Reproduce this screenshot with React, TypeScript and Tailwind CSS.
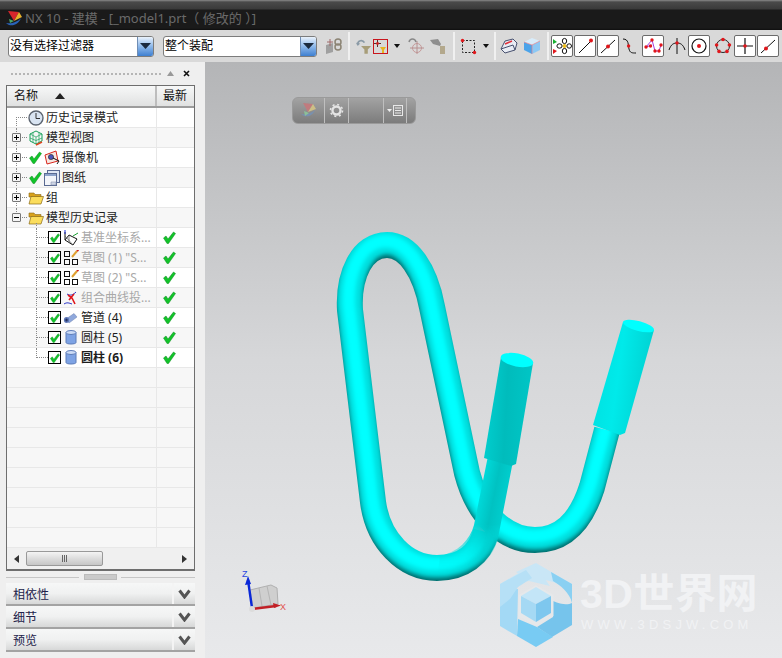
const cjk = "font-['Noto_Sans','Noto_Sans_CJK_SC',sans-serif]";

function TitleLogo() {
  return (
    <svg width="18" height="18" viewBox="0 0 18 18" className="mr-[2px]">
      <path d="M1 13C5 17 13 16 16 8C13 12 6 14 1 13Z" fill="#2a63b8" />
      <path d="M3 1L14 2L9 11Z" fill="#d8262c" />
      <path d="M9 11L14 2L17 7Z" fill="#e9b12c" />
      <path d="M4 9L9 11L5 13Z" fill="#4aa868" />
    </svg>
  );
}

function SelectBox({ label, width }: { label: string; width: string }) {
  return (
    <div className={`${width} h-[21px] flex items-center rounded-[3px] border border-[#7c7c7c] bg-white overflow-hidden`}>
      <span className="flex-1 pl-[1px] text-[12px] leading-none text-black">{label}</span>
      <span className="w-[16px] h-full flex items-center justify-center bg-gradient-to-b from-[#eaf2fb] via-[#8db8ea] to-[#3d7fd0] border-l border-[#6f8db4]">
        <svg width="11" height="7" viewBox="0 0 11 7"><path d="M0 0H11L5.5 6Z" fill="#1b2a3e" /></svg>
      </span>
    </div>
  );
}

function Sep() {
  return <div className="w-[2px] h-[28px] bg-[#f0f0f0]" />;
}

function Boxed({ children }: { children: React.ReactNode }) {
  return (
    <div className="w-[22px] h-[22px] mr-[1px] shrink-0 rounded-[2px] border border-[#6b6b6b] bg-white flex items-center justify-center">
      {children}
    </div>
  );
}

function Free({ w, children }: { w: string; children: React.ReactNode }) {
  return <div className={`${w} h-[22px] shrink-0 flex items-center justify-center`}>{children}</div>;
}

function Caret() {
  return <svg width="6" height="4" viewBox="0 0 6 4"><path d="M0 0H6L3 4Z" fill="#111" /></svg>;
}

function Dot({ cx, cy, r = 1.7 }: { cx: number; cy: number; r?: number }) {
  return <circle cx={cx} cy={cy} r={r} fill="#e0161b" />;
}

function Toolbar() {
  return (
    <div className={`h-[32px] bg-[#d9d9d9] flex items-center pl-[8px] ${cjk}`}>
      <SelectBox label="没有选择过滤器" width="w-[146px]" />
      <div className="w-[9px]" />
      <SelectBox label="整个装配" width="w-[154px]" />
      <Free w="w-[28px] pl-[6px]">
        <svg width="18" height="18" viewBox="0 0 18 18">
          <path d="M1 8L8 6V15L1 17Z" fill="#a0a0a0" />
          <circle cx="13" cy="5" r="3" fill="none" stroke="#8c8474" strokeWidth="1.5" />
          <circle cx="13" cy="10" r="3" fill="none" stroke="#8c8474" strokeWidth="1.5" />
          <path d="M5 2V9M2 5H8" stroke="#a06a6a" />
        </svg>
      </Free>
      <div className="w-[3px]" />
      <Sep />
      <div className="w-[6px]" />
      <Free w="w-[16px]">
        <svg width="19" height="19" viewBox="0 0 19 19" fill="none">
          <path d="M2 7C2 2 8 1 10 5" stroke="#8a9aa6" strokeWidth="2" />
          <path d="M0 5L2 9L5 6Z" fill="#8a9aa6" />
          <path d="M6 9H18L14 13V18H10V13Z" fill="#a79d78" />
        </svg>
      </Free>
      <div className="w-[15px] h-[15px] mx-[1px] border border-[#c8161d] relative shrink-0 flex items-center justify-center">
        <svg width="13" height="13" viewBox="0 0 13 13">
          <path d="M0 3.5H7M3.5 0V7" stroke="#5a2b2b" />
          <circle cx="3.5" cy="3.5" r="1.4" fill="#d02020" />
          <path d="M6 7H12L10 10V13H8V10Z" fill="#e6b422" />
        </svg>
      </div>
      <Free w="w-[16px]"><Caret /></Free>
      <Free w="w-[22px]">
        <svg width="18" height="18" viewBox="0 0 18 18" fill="none">
          <circle cx="10" cy="11" r="4.5" stroke="#c69a9a" />
          <path d="M10 4V17M3 11H17" stroke="#b89090" />
          <path d="M2 5C3 1 8 1 9 5" stroke="#888" strokeWidth="1.5" />
        </svg>
      </Free>
      <Free w="w-[20px]">
        <svg width="18" height="18" viewBox="0 0 18 18">
          <path d="M2 3L10 2L13 7L12 9L5 7Z" fill="#8f8f8f" />
          <path d="M12 9H17V17H12Z" fill="#b3a88c" />
        </svg>
      </Free>
      <div className="w-[6px]" />
      <Sep />
      <div className="w-[2px]" />
      <Free w="w-[22px]">
        <svg width="17" height="17" viewBox="0 0 17 17" fill="none">
          <rect x="2.5" y="2.5" width="12" height="12" stroke="#222" strokeDasharray="2 1.5" />
          <Dot cx={2.5} cy={2.5} /><Dot cx={14.5} cy={14.5} />
        </svg>
      </Free>
      <Free w="w-[14px]"><Caret /></Free>
      <div className="w-[1px]" />
      <Sep />
      <div className="w-[2px]" />
      <Free w="w-[22px]">
        <svg width="18" height="16" viewBox="0 0 18 16">
          <path d="M1 11L5 3L13 1L17 5L15 12L5 15Z" fill="#e8ecf4" stroke="#47506e" />
          <path d="M5 6L12 3" stroke="#e0303a" strokeWidth="1.5" />
          <path d="M1 11L13 7L15 12" fill="none" stroke="#47506e" />
        </svg>
      </Free>
      <Free w="w-[24px]">
        <svg width="18" height="18" viewBox="0 0 18 18">
          <path d="M1 5L9 8V17L1 13Z" fill="#4aa3ea" />
          <path d="M9 8L17 4V13L9 17Z" fill="#8cc8f4" />
          <path d="M1 5L9 1L17 4L9 8Z" fill="#d8ecfa" />
          <path d="M1 5L9 8L17 4M9 8V17" fill="none" stroke="#e0808a" strokeWidth="0.7" />
        </svg>
      </Free>
      <div className="w-[3px]" />
      <Sep />
      <div className="w-[2px]" />
      <Boxed>
        <svg width="20" height="20" viewBox="0 0 20 20" fill="none">
          <path d="M1 3L5 6L1 8Z" fill="#18b030" /><path d="M1 13L5 15L1 18Z" fill="#e0161b" />
          <circle cx="12.5" cy="10" r="2" fill="#f0c020" />
          <ellipse cx="12.5" cy="5" rx="2.2" ry="2.6" stroke="#111" /><ellipse cx="12.5" cy="15" rx="2.2" ry="2.6" stroke="#111" />
          <ellipse cx="7.5" cy="10" rx="2.6" ry="2.2" stroke="#111" /><ellipse cx="17.2" cy="10" rx="2.3" ry="2.2" stroke="#111" />
        </svg>
      </Boxed>
      <Boxed>
        <svg width="18" height="18" viewBox="0 0 18 18"><path d="M3 16L14 5" stroke="#111" /><Dot cx={15} cy={3.5} r={2} /></svg>
      </Boxed>
      <Boxed>
        <svg width="18" height="18" viewBox="0 0 18 18"><path d="M2 16L16 3" stroke="#111" /><Dot cx={9} cy={9.5} r={2} /></svg>
      </Boxed>
      <Free w="w-[22px]">
        <svg width="18" height="18" viewBox="0 0 18 18" fill="none"><path d="M1 2C7 2 6 8 7 12C8 16 10 16 14 16" stroke="#111" /><Dot cx={6.6} cy={9} /></svg>
      </Free>
      <Boxed>
        <svg width="19" height="18" viewBox="0 0 19 18" fill="none">
          <path d="M2 10L8 3L11 14L15 14L17 8" stroke="#a23be0" />
          <path d="M2 10L8 8" stroke="#a23be0" />
          <Dot cx={2} cy={10} /><Dot cx={8} cy={3} /><Dot cx={6.5} cy={9} /><Dot cx={11} cy={14} /><Dot cx={15} cy={14} /><Dot cx={17} cy={8} />
        </svg>
      </Boxed>
      <Free w="w-[23px]">
        <svg width="18" height="18" viewBox="0 0 18 18" fill="none"><path d="M1 13C3 7 6 6 9 6C12 6 15 7 17 13M9 1V17" stroke="#111" /><Dot cx={9} cy={6} /></svg>
      </Free>
      <Boxed>
        <svg width="18" height="18" viewBox="0 0 18 18" fill="none"><circle cx="9" cy="9" r="7" stroke="#111" strokeWidth="1.2" /><Dot cx={9} cy={9} r={2} /></svg>
      </Boxed>
      <Free w="w-[23px]">
        <svg width="18" height="18" viewBox="0 0 18 18" fill="none">
          <circle cx="9" cy="9" r="6.5" stroke="#222" />
          <Dot cx={9} cy={2.5} r={1.8} /><Dot cx={2.6} cy={8} r={1.8} /><Dot cx={15.4} cy={8} r={1.8} /><Dot cx={5} cy={14.4} r={1.8} /><Dot cx={13} cy={14.4} r={1.8} />
        </svg>
      </Free>
      <Boxed>
        <svg width="18" height="18" viewBox="0 0 18 18"><path d="M1 9H17M9 1V17" stroke="#111" strokeWidth="1.2" /><Dot cx={9} cy={9} r={1.8} /></svg>
      </Boxed>
      <Boxed>
        <svg width="18" height="18" viewBox="0 0 18 18"><path d="M2 16L16 3" stroke="#111" /><Dot cx={7} cy={11.5} r={2} /></svg>
      </Boxed>
    </div>
  );
}

function Check({ size = 13 }: { size?: number }) {
  return (
    <svg width={size} height={size} viewBox="0 0 13 13">
      <path d="M0.5 7L3 5L5 8L10.5 1L12.5 2.5L5.5 12.5H4Z" fill="#12c32a" stroke="#0a8a1c" strokeWidth="0.5" />
    </svg>
  );
}

function Expander({ minus }: { minus?: boolean }) {
  return (
    <div className="w-[9px] h-[9px] border border-[#777] rounded-[1px] bg-[#f4f4f4] flex items-center justify-center relative">
      <div className="absolute w-[5px] h-[1px] bg-black" />
      {!minus && <div className="absolute w-[1px] h-[5px] bg-black" />}
    </div>
  );
}

function NodeIcon({ kind }: { kind: string }) {
  switch (kind) {
    case "clock":
      return (
        <svg width="16" height="16" viewBox="0 0 16 16">
          <circle cx="8" cy="8" r="7" fill="#d9e4f2" stroke="#5c6470" strokeWidth="1.4" />
          <path d="M8 3V8.5H12" fill="none" stroke="#333" />
        </svg>
      );
    case "view":
      return (
        <svg width="16" height="16" viewBox="0 0 16 16" fill="none" stroke="#17a05a">
          <path d="M8 1L14 4V11L8 14L2 11V4Z" />
          <path d="M2 4L8 7L14 4M8 7V14M2 8L8 10.5L14 8M5 2.5V12.5M11 2.5V12.5" strokeWidth="0.7" />
          <path d="M8 15L14 12" stroke="#e0431f" strokeWidth="1.4" />
        </svg>
      );
    case "camera":
      return (
        <svg width="16" height="16" viewBox="0 0 16 16" fill="none">
          <path d="M1 5L12 1L14 11L3 14Z" fill="#f6e6e0" stroke="#d8261c" />
          <circle cx="7" cy="7" r="2.6" fill="#4c55b8" stroke="#222" strokeWidth="0.6" />
          <path d="M9 8L15 11L13 14" stroke="#111" />
        </svg>
      );
    case "drawing":
      return (
        <svg width="16" height="16" viewBox="0 0 16 16">
          <rect x="3.5" y="0.5" width="12" height="12" fill="#dfe6f3" stroke="#5a6a92" />
          <rect x="0.5" y="3.5" width="12" height="12" fill="#f3f5fa" stroke="#5a6a92" />
          <path d="M1 4H12V6H1Z" fill="#8ea4cc" />
          <path d="M7 12H12V15H7Z" fill="#cfd6e6" stroke="#7a86a0" strokeWidth="0.5" />
        </svg>
      );
    case "folder":
      return (
        <svg width="16" height="14" viewBox="0 0 16 14">
          <path d="M1 2H6L7 3.5H13V6H1Z" fill="#d9a21c" stroke="#8a6a18" strokeWidth="0.6" />
          <path d="M1 13L3 5.5H15.5L13 13Z" fill="#fbdd5d" stroke="#8a6a18" strokeWidth="0.7" />
        </svg>
      );
    case "datum":
      return (
        <svg width="16" height="16" viewBox="0 0 16 16" fill="none">
          <path d="M2 2V10L10 15L14 9L6 5L2 10" stroke="#111" />
          <path d="M2 6L10 15M6 5L6 12" stroke="#555" strokeWidth="0.7" />
          <path d="M2 4V0" stroke="#1c30d8" /><path d="M10 6L15 3" stroke="#18a030" />
        </svg>
      );
    case "sketch":
      return (
        <svg width="16" height="16" viewBox="0 0 16 16" fill="none" stroke="#111">
          <rect x="1.5" y="1.5" width="5" height="5" />
          <rect x="1.5" y="9.5" width="5" height="5" />
          <rect x="9.5" y="9.5" width="5" height="5" />
          <path d="M9 7L14 1" stroke="#e0a030" strokeWidth="2" />
          <path d="M14 1L15.5 0" stroke="#d02020" strokeWidth="2" />
        </svg>
      );
    case "project":
      return (
        <svg width="16" height="16" viewBox="0 0 16 16" fill="none">
          <path d="M1 14C4 12 6 13 9 14M4 4C7 6 10 5 13 2" stroke="#2b35c8" />
          <path d="M6 10L11 4M5 5L9 8L12 14" stroke="#e0161b" strokeWidth="1.6" />
        </svg>
      );
    case "pipe":
      return (
        <svg width="16" height="12" viewBox="0 0 16 12">
          <path d="M3 7L11 1.5L14 5L6 11Z" fill="#8fa8dc" stroke="#6f82b0" strokeWidth="0.5" />
          <ellipse cx="3.5" cy="8" rx="2.6" ry="3" fill="#5f78b8" />
          <ellipse cx="3.5" cy="8" rx="1.2" ry="1.5" fill="#27345e" />
        </svg>
      );
    default:
      return (
        <svg width="12" height="15" viewBox="0 0 12 15">
          <path d="M1 2.5V12.5C1 14.5 11 14.5 11 12.5V2.5Z" fill="#7ea3e4" stroke="#5d7cb8" />
          <ellipse cx="6" cy="2.5" rx="5" ry="2" fill="#cddcf6" stroke="#5d7cb8" />
        </svg>
      );
  }
}

type Row = { label?: string; kind?: string; level?: number; exp?: "plus" | "minus"; check?: boolean; gray?: boolean; bold?: boolean; latest?: boolean };

const rows: Row[] = [
  { label: "历史记录模式", kind: "clock", level: 0 },
  { label: "模型视图", kind: "view", level: 0, exp: "plus" },
  { label: "摄像机", kind: "camera", level: 0, exp: "plus", check: true },
  { label: "图纸", kind: "drawing", level: 0, exp: "plus", check: true },
  { label: "组", kind: "folder", level: 0, exp: "plus" },
  { label: "模型历史记录", kind: "folder", level: 0, exp: "minus" },
  { label: "基准坐标系...", kind: "datum", level: 1, gray: true, latest: true },
  { label: '草图 (1) "S...', kind: "sketch", level: 1, gray: true, latest: true },
  { label: '草图 (2) "S...', kind: "sketch", level: 1, gray: true, latest: true },
  { label: "组合曲线投...", kind: "project", level: 1, gray: true, latest: true },
  { label: "管道 (4)", kind: "pipe", level: 1, latest: true },
  { label: "圆柱 (5)", kind: "cyl", level: 1, latest: true },
  { label: "圆柱 (6)", kind: "cyl", level: 1, bold: true, latest: true },
  ...Array.from({ length: 9 }, () => ({})),
];

function TreeRow({ row, index }: { row: Row; index: number }) {
  const shade = index % 2 === 1 ? "bg-[#f7f7f7]" : "bg-white";
  const isChild = row.level === 1;
  const isTop = row.level === 0;
  return (
    <div className={`h-[20px] flex border-b border-[#e8e8e8] ${index >= 13 ? "bg-[#f7f7f7]" : shade}`}>
      <div className="w-[150px] shrink-0 relative flex items-center border-r border-[#e8e8e8] overflow-hidden">
        {isTop && (
          <>
            <div className={`absolute left-[9px] w-0 border-l border-dotted border-[#888] ${index === 0 ? "top-[9px] h-[11px]" : index === 5 ? "top-0 h-[10px]" : "top-0 h-[20px]"}`} />
            <div className="absolute left-[9px] top-[9px] w-[11px] h-0 border-t border-dotted border-[#888]" />
          </>
        )}
        {isChild && (
          <>
            <div className={`absolute left-[29px] top-0 w-0 border-l border-dotted border-[#888] ${index === 12 ? "h-[10px]" : "h-[20px]"}`} />
            <div className="absolute left-[29px] top-[9px] w-[12px] h-0 border-t border-dotted border-[#888]" />
          </>
        )}
        {index === 5 && <div className="absolute left-[29px] top-[15px] h-[5px] w-0 border-l border-dotted border-[#888]" />}
        {row.exp && (
          <div className="absolute left-[5px] top-[5px]">
            <Expander minus={row.exp === "minus"} />
          </div>
        )}
        {isTop && (
          <div className="flex items-center pl-[20px]">
            {row.check && <div className="w-[16px] flex justify-center"><Check /></div>}
            <div className="w-[17px] flex justify-center"><NodeIcon kind={row.kind!} /></div>
          </div>
        )}
        {isChild && (
          <div className="flex items-center pl-[41px]">
            <div className="w-[13px] h-[13px] border border-black bg-white flex items-center justify-center mr-[2px]">
              <Check size={10} />
            </div>
            <div className="w-[16px] flex justify-center"><NodeIcon kind={row.kind!} /></div>
          </div>
        )}
        {row.label && (
          <span className={`ml-[2px] whitespace-nowrap text-[12px] leading-none ${row.gray ? "text-[#a8a8a8]" : "text-[#1c1c1c]"} ${row.bold ? "font-bold" : ""}`}>
            {row.label}
          </span>
        )}
      </div>
      <div className="flex-1 flex items-center pl-[6px]">{row.latest && <Check />}</div>
    </div>
  );
}

function ScrollBar() {
  return (
    <div className="h-[21px] flex items-center bg-[#f0f0f0]">
      <div className="w-[19px] flex justify-center">
        <svg width="5" height="8" viewBox="0 0 5 8"><path d="M5 0V8L0 4Z" fill="#333" /></svg>
      </div>
      <div className="w-[77px] h-[15px] rounded-[2px] border border-[#999] bg-gradient-to-b from-[#f4f4f4] to-[#c6c6c6] flex items-center justify-center gap-[1px]">
        <span className="w-[1px] h-[7px] bg-[#666]" />
        <span className="w-[1px] h-[7px] bg-[#666]" />
        <span className="w-[1px] h-[7px] bg-[#666]" />
      </div>
      <div className="flex-1" />
      <div className="w-[19px] flex justify-center">
        <svg width="5" height="8" viewBox="0 0 5 8"><path d="M0 0V8L5 4Z" fill="#333" /></svg>
      </div>
    </div>
  );
}

function Accordion({ label }: { label: string }) {
  return (
    <div className="h-[23px] flex border-b-2 border-[#a3a3a3] bg-gradient-to-b from-[#f6f7f7] via-[#f0f1f1] to-[#d7d8d8]">
      <span className="flex-1 pl-[7px] pt-[2px] text-[12px] leading-[20px] text-[#22224a]">{label}</span>
      <div className="w-[23px] flex items-center justify-center pr-[1px] border-l-2 border-[#f4f4f4]">
        <svg width="13" height="10" viewBox="0 0 13 10" fill="none"><path d="M1.5 1.5L6.5 8L11.5 1.5" stroke="#555" strokeWidth="3" /></svg>
      </div>
    </div>
  );
}

function SidePanel() {
  return (
    <div className={`w-[205px] shrink-0 bg-[#efefef] pl-[6px] pr-[10px] flex flex-col ${cjk}`}>
      <div className="h-[23px] flex items-center">
        <div className="ml-[5px] w-[150px] h-0 border-t-2 border-dotted border-[#b5b5b5]" />
        <svg width="7" height="5" viewBox="0 0 7 5" className="ml-[6px]"><path d="M0 5H7L3.5 0Z" fill="#999" /></svg>
        <svg width="7" height="7" viewBox="0 0 7 7" className="ml-[9px]"><path d="M1 1L6 6M6 1L1 6" stroke="#111" strokeWidth="1.6" /></svg>
      </div>
      <div className="border-x border-t border-b-2 border-[#6e6e6e] bg-white flex flex-col">
        <div className="h-[22px] flex border-b-2 border-[#9c9c9c] bg-gradient-to-b from-[#f7f8f8] to-[#e0e1e1] text-[12px] text-[#111]">
          <div className="w-[150px] flex items-center pl-[7px] border-r-2 border-[#bdbdbd]">
            <span>名称</span>
            <svg width="10" height="6" viewBox="0 0 10 6" className="ml-[17px]"><path d="M0 6H10L5 0Z" fill="#222" /></svg>
          </div>
          <div className="flex-1 flex items-center pl-[6px]">最新</div>
        </div>
        {rows.map((r, i) => <TreeRow key={i} row={r} index={i} />)}
        <ScrollBar />
      </div>
      <div className="h-[12px] flex items-center">
        <div className="w-[73px] h-[1px] bg-[#c6c6c6]" />
        <div className="ml-[5px] w-[33px] h-[6px] bg-[#cacaca] border border-[#bbb]" />
        <div className="ml-[4px] flex-1 h-[1px] bg-[#c6c6c6]" />
      </div>
      <Accordion label="相依性" />
      <Accordion label="细节" />
      <Accordion label="预览" />
    </div>
  );
}

const pipePath = "M607 430L592 487C580 525 560 540 535 540C505 540 478 515 467 473L432 307C425 270 408 245 387 245C362 245 348 275 350 310L373 502C378 540 405 568 437 568C462 568 480 555 486 532";

function Model() {
  return (
    <svg className="absolute left-[-205px] top-[-62px]" width="782" height="658" viewBox="0 0 782 658">
      <defs>
        <filter id="soft" x="-20%" y="-20%" width="140%" height="140%"><feGaussianBlur stdDeviation="2.2" /></filter>
        <linearGradient id="cylR" x1="0" y1="0" x2="1" y2="0.25">
          <stop offset="0" stopColor="#00dede" /><stop offset="0.5" stopColor="#00eaea" /><stop offset="1" stopColor="#00d2d2" />
        </linearGradient>
        <linearGradient id="cylL" x1="0" y1="0" x2="1" y2="0.12">
          <stop offset="0" stopColor="#00d2d2" /><stop offset="0.5" stopColor="#00bcbc" /><stop offset="1" stopColor="#00c6c6" />
        </linearGradient>
        <linearGradient id="stem" gradientUnits="userSpaceOnUse" x1="478" y1="490" x2="508" y2="496">
          <stop offset="0" stopColor="#00dede" /><stop offset="0.55" stopColor="#00c2c2" /><stop offset="1" stopColor="#00cfcf" />
        </linearGradient>
        <linearGradient id="stemFade" gradientUnits="userSpaceOnUse" x1="0" y1="525" x2="0" y2="572">
          <stop offset="0" stopColor="white" /><stop offset="1" stopColor="black" />
        </linearGradient>
        <mask id="stemMask" maskUnits="userSpaceOnUse" x="0" y="0" width="782" height="658">
          <rect x="0" y="0" width="782" height="658" fill="url(#stemFade)" />
        </mask>
        <mask id="pipeMask" maskUnits="userSpaceOnUse" x="0" y="0" width="782" height="658">
          <path d={pipePath} fill="none" stroke="white" strokeWidth="26" />
        </mask>
      </defs>
      <g mask="url(#pipeMask)">
        <path d={pipePath} fill="none" stroke="#006b6b" strokeWidth="28" />
        <path d={pipePath} fill="none" stroke="#00dede" strokeWidth="27" transform="translate(0 -4)" filter="url(#soft)" />
        <path d={pipePath} fill="none" stroke="#00ffff" strokeWidth="13" transform="translate(-1 -4)" filter="url(#soft)" />
      </g>
      <g mask="url(#stemMask)">
        <path d="M488 456L474 525C470 540 458 552 440 556L437 581C470 581 492 562 498 538L513 461Z" fill="url(#stem)" />
      </g>
      <path d="M623 322L654 330L625 433L620 435L593 425Z" fill="url(#cylR)" />
      <ellipse cx="638.5" cy="326" rx="16" ry="5" transform="rotate(15 638.5 326)" fill="#00ffff" />
      <path d="M501 357L533 363L516 464L511 466L484 458Z" fill="url(#cylL)" />
      <ellipse cx="517" cy="360" rx="16.5" ry="6.5" transform="rotate(11 517 360)" fill="#00ffff" />
    </svg>
  );
}

function FloatingBar() {
  return (
    <div className="absolute left-[87px] top-[35px] w-[124px] h-[27px] rounded-[6px] border border-[#9a9a9a] bg-gradient-to-b from-[#a3a3a3] to-[#7c7c7c] flex overflow-hidden">
      <div className="w-[32px] flex items-center justify-center border-r border-[#bfbfbf]">
        <svg width="17" height="17" viewBox="0 0 17 17">
          <path d="M1 12C5 16 12 15 15 8C12 11 6 13 1 12Z" fill="#7890b0" />
          <path d="M3 1L13 2L8 10Z" fill="#c07b7e" />
          <path d="M8 10L13 2L16 7Z" fill="#cdbf86" />
          <path d="M4 9L9 11L5 14Z" fill="#8cc098" />
        </svg>
      </div>
      <div className="w-[24px] flex items-center justify-center border-r border-[#bfbfbf]">
        <svg width="15" height="15" viewBox="0 0 15 15" fill="none">
          <circle cx="7.5" cy="7.5" r="4" stroke="#e4e4e4" strokeWidth="2.4" />
          <circle cx="7.5" cy="7.5" r="6" stroke="#e4e4e4" strokeWidth="1.6" strokeDasharray="2 2.7" />
        </svg>
      </div>
      <div className="w-[35px] border-r border-[#bfbfbf]" />
      <div className="w-[23px] flex items-center justify-center gap-[1px] border-r border-[#bfbfbf]">
        <svg width="5" height="3" viewBox="0 0 5 3"><path d="M0 0H5L2.5 3Z" fill="#f0f0f0" /></svg>
        <svg width="10" height="11" viewBox="0 0 10 11" fill="none"><rect x="0.5" y="0.5" width="9" height="10" stroke="#e8e8e8" /><path d="M2 3H8M2 5.5H8M2 8H8" stroke="#e8e8e8" /></svg>
      </div>
      <div className="flex-1" />
    </div>
  );
}

function Triad() {
  return (
    <svg className="absolute left-[35px] top-[506px]" width="52" height="50" viewBox="0 0 52 50">
      <path d="M10 22L31 17L37 20L38 36L13 40Z" fill="#cfcfcf" stroke="#b0b0b0" />
      <path d="M19 20L22 38M27 18L31 37" stroke="#b5b5b5" fill="none" />
      <path d="M8 12L12 40" stroke="#0a28d8" strokeWidth="2.4" />
      <path d="M5 17L8 8L11 16Z" fill="#0a28d8" />
      <path d="M12 41L36 38" stroke="#c22026" strokeWidth="2.4" />
      <path d="M33 35L41 37.5L34 40Z" fill="#c22026" />
      <circle cx="12" cy="41" r="3" fill="#dcdcdc" />
      <text x="2" y="9" fontSize="9" fill="#2a45e0" fontFamily="Liberation Sans">Z</text>
      <text x="40" y="42" fontSize="9" fill="#e25050" fontFamily="Liberation Sans">X</text>
    </svg>
  );
}

function Watermark() {
  return (
    <div className="absolute left-[295px] top-[501px] flex items-start">
      <svg width="74" height="84" viewBox="0 0 74 84">
        <path d="M36 0L72 21V31C62 20 45 14 29 18L16 9Z" fill="#c9e6f6" />
        <path d="M0 21L34 1L50 23L29 18Z" fill="#c9e6f6" />
        <path d="M51 9L72 21V40C70 30 60 22 53 18Z" fill="#8ad0f2" />
        <path d="M72 40V62L52 74L37 64L53 54V38C62 42 68 42 72 40Z" fill="#76c4ec" />
        <path d="M36 84L17 73L18 56L37 64L53 74Z" fill="#78cbf3" />
        <path d="M0 63V40C2 34 10 26 18 26L17 73Z" fill="#a3d9f5" />
        <path d="M0 21L26 7L32 15L18 24L10 36L0 44Z" fill="#b6e0f6" />
        <path d="M36 24L52 33V52L36 61L20 52V33Z" fill="#e6e8ea" stroke="#e6e8ea" strokeWidth="3" />
        <path d="M36 24L51 33L36 41L21 33Z" fill="#c3e5f7" />
        <path d="M21 33L36 41V59L21 50Z" fill="#a5d9f4" />
        <path d="M51 33V50L36 59V41Z" fill="#7ec7ee" />
      </svg>
      <div className="ml-[6px] pt-[11px] flex flex-col">
        <span className="font-['Liberation_Sans','Noto_Sans_CJK_SC',sans-serif] font-bold text-[41px] leading-[40px] tracking-[0.5px] whitespace-nowrap text-[#f1f2f4]">3D世界网</span>
        <span className="mt-[4px] pl-[1px] font-['Liberation_Sans',sans-serif] text-[13px] leading-[14px] tracking-[4.2px] whitespace-nowrap text-[#f1f2f4]">WWW.3DSJW.COM</span>
      </div>
    </div>
  );
}

export default function App() {
  return (
    <div className="w-[782px] h-[658px] flex flex-col overflow-hidden bg-[#d9d9d9]">
      <div className="h-[30px] flex items-center pl-[5px] pt-[8px] bg-[linear-gradient(#8a8a8a_0,#4a4a4a_2px,#3a3a3a_9px,#1a1a1a_10px,#1a1a1a_28px,#0e0e0e_100%)] font-['Noto_Sans','Noto_Sans_CJK_SC',sans-serif] text-[13px] text-[#6a6a6a] whitespace-pre">
        <TitleLogo />
        <span>NX 10 - 建模 - [_model1.prt（ 修改的 ）]</span>
      </div>
      <Toolbar />
      <div className="flex-1 flex min-h-0">
        <SidePanel />
        <div className="flex-1 relative overflow-hidden bg-gradient-to-b from-[#b4b5b7] via-[#d6d7d9] to-[#e8e9eb]">
          <Model />
          <FloatingBar />
          <Triad />
          <Watermark />
        </div>
      </div>
    </div>
  );
}
